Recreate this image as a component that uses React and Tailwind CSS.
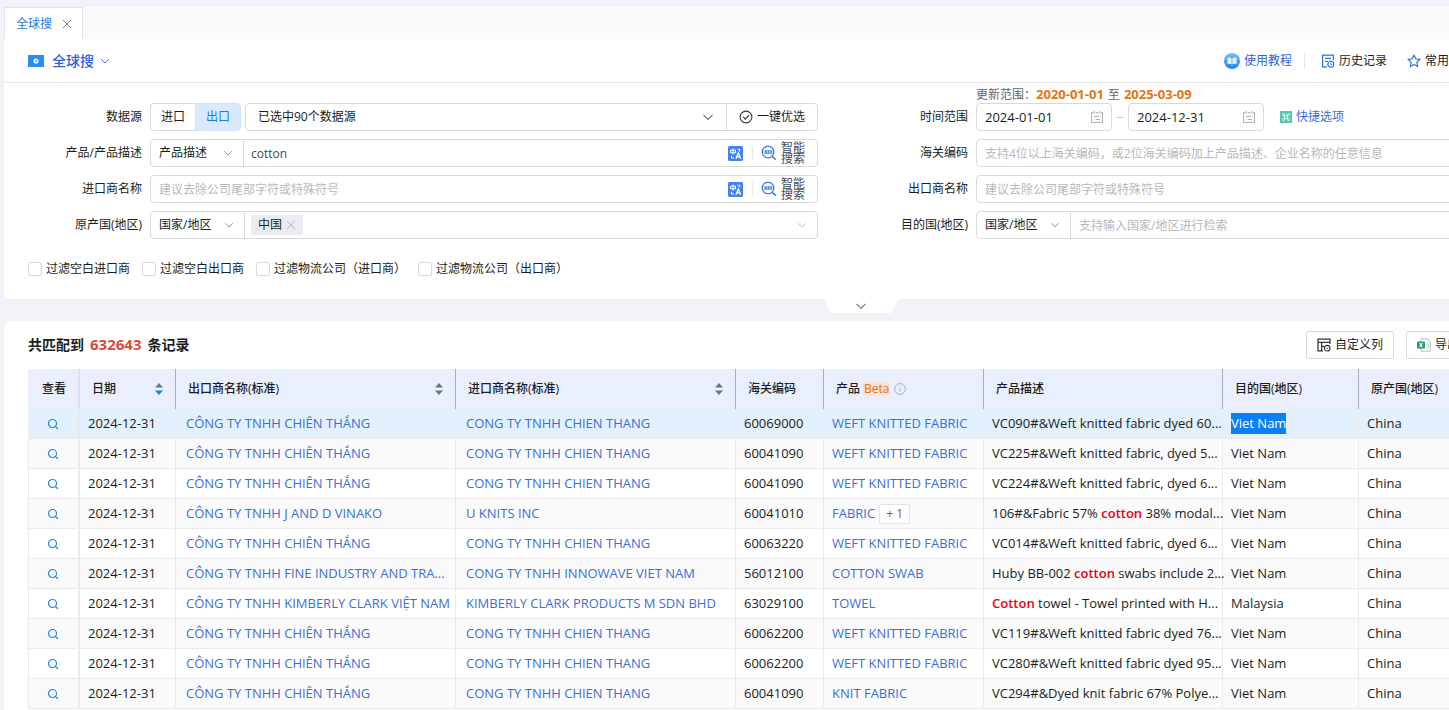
import { Fragment } from 'react'
import { Search } from 'lucide-react'

const EXPORTER = 'CÔNG TY TNHH CHIÊN THẮNG'
const IMPORTER = 'CONG TY TNHH CHIEN THANG'
const WEFT = 'WEFT KNITTED FABRIC'

const ROWS = [
  { exporter: EXPORTER, importer: IMPORTER, hs: '60069000', product: WEFT, desc: 'VC090#&Weft knitted fabric dyed 60...', dest: 'Viet Nam', active: true },
  { exporter: EXPORTER, importer: IMPORTER, hs: '60041090', product: WEFT, desc: 'VC225#&Weft knitted fabric, dyed 5...', dest: 'Viet Nam' },
  { exporter: EXPORTER, importer: IMPORTER, hs: '60041090', product: WEFT, desc: 'VC224#&Weft knitted fabric, dyed 6...', dest: 'Viet Nam' },
  { exporter: 'CÔNG TY TNHH J AND D VINAKO', importer: 'U KNITS INC', hs: '60041010', product: 'FABRIC', more: '+ 1', desc: '106#&Fabric 57% cotton 38% modal...', dest: 'Viet Nam' },
  { exporter: EXPORTER, importer: IMPORTER, hs: '60063220', product: WEFT, desc: 'VC014#&Weft knitted fabric, dyed 6...', dest: 'Viet Nam' },
  { exporter: 'CÔNG TY TNHH FINE INDUSTRY AND TRA...', importer: 'CONG TY TNHH INNOWAVE VIET NAM', hs: '56012100', product: 'COTTON SWAB', desc: 'Huby BB-002 cotton swabs include 2...', dest: 'Viet Nam' },
  { exporter: 'CÔNG TY TNHH KIMBERLY CLARK VIỆT NAM', importer: 'KIMBERLY CLARK PRODUCTS M SDN BHD', hs: '63029100', product: 'TOWEL', desc: 'Cotton towel - Towel printed with H...', dest: 'Malaysia' },
  { exporter: EXPORTER, importer: IMPORTER, hs: '60062200', product: WEFT, desc: 'VC119#&Weft knitted fabric dyed 76...', dest: 'Viet Nam' },
  { exporter: EXPORTER, importer: IMPORTER, hs: '60062200', product: WEFT, desc: 'VC280#&Weft knitted fabric dyed 95...', dest: 'Viet Nam' },
  { exporter: EXPORTER, importer: IMPORTER, hs: '60041090', product: 'KNIT FABRIC', desc: 'VC294#&Dyed knit fabric 67% Polye...', dest: 'Viet Nam' },
]

const FILTERS = ['过滤空白进口商', '过滤空白出口商', '过滤物流公司（进口商）', '过滤物流公司（出口商）']

function Chevron({ className }) {
  return (
    <svg viewBox="0 0 12 12" className={className} fill="none" stroke="currentColor" strokeWidth="1.1">
      <path d="M1.5 3.8 6 8.4l4.5-4.6" />
    </svg>
  )
}

function Close({ className }) {
  return (
    <svg viewBox="0 0 10 10" className={className} fill="none" stroke="currentColor" strokeWidth="1">
      <path d="m1 1 8 8M9 1 1 9" />
    </svg>
  )
}

function CalendarIcon() {
  return (
    <svg viewBox="0 0 14 14" className="h-3.5 w-3.5 shrink-0 text-[#b0b0b0]" fill="none" stroke="currentColor">
      <path d="M3 2.5H1.5v10h11v-10H11M5.5 2.5h3M4 .8v3M10 .8v3M4 6.5h5M5.5 9.5H10" />
    </svg>
  )
}

function TranslateIcon() {
  return (
    <svg viewBox="0 0 15 15" className="h-[15px] w-[15px]" fill="none" stroke="#fff">
      <rect width="15" height="15" rx="1.5" fill="#4383ee" stroke="none" />
      <path d="M2.5 4.2h5v2.6h-5zM5 2.5v6M9.5 3.2h2.2v2.3M3.5 9.8V12h2.6" />
      <path d="m8 12.8 2.3-6 2.3 6M8.8 10.9h3" strokeWidth="1.3" />
    </svg>
  )
}

function SmartSearchIcon() {
  return (
    <svg viewBox="0 0 16 16" className="h-4 w-4" fill="none" stroke="#3a7be0">
      <circle cx="7" cy="7" r="5.8" strokeWidth="1.3" />
      <path d="m11.2 11.2 3.6 3.6" strokeWidth="1.6" />
      <path d="M3.6 8.8 5 5.2l1.2 3.6M4.2 7.7h1.6M7.5 5.2v3.6M9.2 5.2v3.6M10.6 5.4v3.2" strokeWidth=".7" />
      <path d="M2.6 7h8.8" strokeWidth="4" opacity=".4" />
    </svg>
  )
}

function SortIcon({ desc }) {
  return (
    <svg viewBox="0 0 8 14" className="h-3.5 w-2 shrink-0">
      <path d="M4 1 8 5.5H0z" fill="#71747f" />
      <path d="M4 13 0 8.5h8z" fill={desc ? '#1a83f0' : '#71747f'} />
    </svg>
  )
}

function Field({ label, htmlFor, children }) {
  return (
    <div className="flex h-7 items-center gap-2">
      <label htmlFor={htmlFor} className="w-[114px] shrink-0 text-right whitespace-nowrap">{label}</label>
      {children}
    </div>
  )
}

function KindSelect({ id, value, label, className }) {
  return (
    <div className={`flex h-full shrink-0 items-center border-r border-[#d9d9d9] ${className}`}>
      <select id={id} aria-label={label} className="h-full w-full cursor-pointer appearance-none bg-transparent pl-2 outline-none">
        <option>{value}</option>
      </select>
      <Chevron className="pointer-events-none mr-2.5 h-2.5 w-2.5 shrink-0 text-[#8c8c8c]" />
    </div>
  )
}

function SmartTools() {
  return (
    <>
      <button type="button" aria-label="翻译" className="shrink-0"><TranslateIcon /></button>
      <span className="mr-2 ml-[9px] h-3.5 w-px bg-[#e8e8e8]" />
      <button type="button" className="mr-3 flex shrink-0 items-center gap-1">
        <SmartSearchIcon />
        <span className="w-6 text-left leading-[11px] text-[#444b5c]">智能搜索</span>
      </button>
    </>
  )
}

function DateBox({ id, value, label }) {
  return (
    <div className="flex h-7 w-[136px] items-center rounded border border-[#d9d9d9] pr-[7px]">
      <input id={id} aria-label={label} defaultValue={value} className="h-full min-w-0 flex-1 bg-transparent pl-2 text-[13px] outline-none" />
      <CalendarIcon />
    </div>
  )
}

function Description({ text }) {
  return text.split(/(cotton)/i).map((part, i) =>
    part.toLowerCase() === 'cotton'
      ? <b key={i} className="font-semibold text-[#e60012]">{part}</b>
      : <Fragment key={i}>{part}</Fragment>
  )
}

function HeadCell({ children, sort, desc, last }) {
  return (
    <th scope="col" className={`bg-[#eaeffe] pr-3 pl-3 font-medium ${last ? '' : 'border-r border-[#a9acc0]'}`}>
      <div className="flex items-center justify-between">
        <span className="flex items-center whitespace-nowrap">{children}</span>
        {sort && <SortIcon desc={desc} />}
      </div>
    </th>
  )
}

function SearchForm() {
  const box = 'flex h-7 items-center rounded border border-[#d9d9d9]'
  return (
    <form className="px-6 pb-5" onSubmit={(e) => e.preventDefault()}>
      <div className="flex gap-9">
        <div className="flex flex-col gap-2 pt-5">
          <Field label="数据源" htmlFor="source">
            <div className="flex w-[668px] gap-1">
              <div className="flex h-7 w-[91px] shrink-0">
                <button type="button" className="flex-1 rounded-l border border-r-0 border-[#d9d9d9]">进口</button>
                <button type="button" className="flex-1 rounded-r border border-[#cfe4fb] bg-[#d7eafe] text-[#1f7ad8]">出口</button>
              </div>
              <div className={`${box} flex-1`}>
                <select id="source" className="h-full flex-1 cursor-pointer appearance-none bg-transparent pl-3 outline-none">
                  <option>已选中90个数据源</option>
                </select>
                <Chevron className="pointer-events-none mr-3 h-3 w-3 text-[#6b6b6b]" />
                <button type="button" className="flex h-full w-[91px] items-center justify-center gap-1 border-l border-[#d9d9d9]">
                  <svg viewBox="0 0 14 14" className="h-3.5 w-3.5" fill="none" stroke="#333" strokeWidth="1.1">
                    <circle cx="7" cy="7" r="5.9" />
                    <path d="m4.2 7 2.1 2.2 3.8-4" />
                  </svg>
                  一键优选
                </button>
              </div>
            </div>
          </Field>
          <Field label="产品/产品描述" htmlFor="product">
            <div className={`${box} w-[668px]`}>
              <KindSelect label="产品类型" value="产品描述" className="w-[93px]" />
              <input id="product" defaultValue="cotton" className="h-full min-w-0 flex-1 pl-[7px] text-[#444] outline-none" />
              <SmartTools />
            </div>
          </Field>
          <Field label="进口商名称" htmlFor="importer">
            <div className={`${box} w-[668px]`}>
              <input id="importer" placeholder="建议去除公司尾部字符或特殊符号" className="h-full min-w-0 flex-1 pl-2 outline-none placeholder:text-[#b8b8b8]" />
              <SmartTools />
            </div>
          </Field>
          <Field label="原产国(地区)" htmlFor="origin">
            <div className={`${box} w-[668px]`}>
              <KindSelect id="origin" value="国家/地区" className="w-[94px]" />
              <span className="ml-1.5 flex h-5 items-center gap-1 rounded-xs bg-[#ebebf2] px-[7px]">
                中国
                <button type="button" aria-label="移除"><Close className="h-2.5 w-2.5 text-[#b4b4bc]" /></button>
              </span>
              <Chevron className="mr-2.5 ml-auto h-2.5 w-2.5 text-[#bfbfbf]" />
            </div>
          </Field>
        </div>

        <div className="flex flex-1 flex-col gap-2 pt-1">
          <div>
            <p className="ml-[122px] flex h-4 items-center whitespace-nowrap text-[#666]">
              <span>更新范围：</span>
              <b className="text-[13px] text-[#e6730c]">2020-01-01</b>
              <span className="mx-1">至</span>
              <b className="text-[13px] text-[#e6730c]">2025-03-09</b>
            </p>
            <Field label="时间范围" htmlFor="from">
              <div className="flex items-center">
                <DateBox id="from" value="2024-01-01" />
                <span className="mx-1 h-px w-2 bg-[#cfcfcf]" />
                <DateBox label="结束日期" value="2024-12-31" />
                <button type="button" className="ml-4 flex items-center gap-1 text-[#3b6fd4]">
                  <svg viewBox="0 0 12 12" className="h-3 w-3" fill="none" stroke="#fff">
                    <rect width="12" height="12" rx="1" fill="#54c7b0" stroke="none" />
                    <path d="M4.5 4.5h3v3h-3zM4.5 4.5h-1a1 1 0 1 1 1-1zM7.5 4.5h1a1 1 0 1 0-1-1zM4.5 7.5h-1a1 1 0 1 0 1 1zM7.5 7.5h1a1 1 0 1 1-1 1z" strokeWidth=".9" />
                  </svg>
                  快捷选项
                </button>
              </div>
            </Field>
          </div>
          <Field label="海关编码" htmlFor="hs">
            <div className={`${box} flex-1`}>
              <input id="hs" placeholder="支持4位以上海关编码，或2位海关编码加上产品描述、企业名称的任意信息" className="h-full min-w-0 flex-1 pl-2 outline-none placeholder:text-[#b8b8b8]" />
            </div>
          </Field>
          <Field label="出口商名称" htmlFor="exporter">
            <div className={`${box} flex-1`}>
              <input id="exporter" placeholder="建议去除公司尾部字符或特殊符号" className="h-full min-w-0 flex-1 pl-2 outline-none placeholder:text-[#b8b8b8]" />
            </div>
          </Field>
          <Field label="目的国(地区)" htmlFor="dest">
            <div className={`${box} flex-1`}>
              <KindSelect label="地区类型" value="国家/地区" className="w-[94px]" />
              <input id="dest" placeholder="支持输入国家/地区进行检索" className="h-full min-w-0 flex-1 pl-2 outline-none placeholder:text-[#b8b8b8]" />
            </div>
          </Field>
        </div>
      </div>

      <div className="mt-5 flex h-5 items-center gap-3">
        {FILTERS.map((name) => (
          <label key={name} className="flex items-center gap-1 whitespace-nowrap">
            <input type="checkbox" className="h-3.5 w-3.5 appearance-none rounded-xs border border-[#d9d9d9] bg-white" />
            {name}
          </label>
        ))}
      </div>
    </form>
  )
}

function ResultTable() {
  return (
    <table className="w-full table-fixed border-separate border-spacing-0 text-left text-[13px]">
      <colgroup>
        <col className="w-[52px]" />
        <col className="w-[96px]" />
        <col className="w-[280px]" />
        <col className="w-[280px]" />
        <col className="w-[88px]" />
        <col className="w-[160px]" />
        <col className="w-[239px]" />
        <col className="w-[136px]" />
        <col />
      </colgroup>
      <thead>
        <tr className="h-10 text-xs">
          <th scope="col" className="border-r-2 border-[#dee0f0] bg-[#eaeffe] pl-0.5 text-center font-medium">查看</th>
          <HeadCell sort desc>日期</HeadCell>
          <HeadCell sort>出口商名称(标准)</HeadCell>
          <HeadCell sort>进口商名称(标准)</HeadCell>
          <HeadCell>海关编码</HeadCell>
          <HeadCell>
            产品
            <span className="ml-[3px] rounded-xs bg-[#fbe3d3] px-px leading-[14px] font-normal text-[#e0701f]">Beta</span>
            <svg viewBox="0 0 12 12" className="ml-1 h-3 w-3" fill="none" stroke="#a8adba">
              <circle cx="6" cy="6" r="5.4" />
              <path d="M6 5.2v3.6M6 3v1.1" />
            </svg>
          </HeadCell>
          <HeadCell>产品描述</HeadCell>
          <HeadCell>目的国(地区)</HeadCell>
          <HeadCell last>原产国(地区)</HeadCell>
        </tr>
      </thead>
      <tbody className="[&_td]:border-b [&_td]:border-[#ebebee] [&_td]:whitespace-nowrap">
        {ROWS.map((row, idx) => (
          <tr key={idx} className={`h-[30px] ${row.active ? 'bg-[#e2f1fd]' : idx % 2 ? 'bg-[#fafafa]' : 'bg-white'}`}>
            <td className="border-r-2 border-l border-r-[#e9e9f2] pr-px text-center">
              <button type="button" aria-label="查看" className="block w-full text-[#1f86e0]">
                <Search className="mx-auto h-3 w-3" strokeWidth={2.4} />
              </button>
            </td>
            <td className="border-r pl-2">2024-12-31</td>
            <td className="border-r pl-2.5"><a href="#" className="text-[#3b6fd4]">{row.exporter}</a></td>
            <td className="border-r pl-2.5"><a href="#" className="text-[#3b6fd4]">{row.importer}</a></td>
            <td className="border-r pl-2">{row.hs}</td>
            <td className="border-r pl-2">
              <a href="#" className="text-[#3b6fd4]">{row.product}</a>
              {row.more && (
                <button type="button" className="ml-1 h-5 rounded-xs border border-[#e2e2e6] bg-white px-1.5 text-xs text-[#666]">{row.more}</button>
              )}
            </td>
            <td className="border-r pl-2"><Description text={row.desc} /></td>
            <td className="border-r pl-2">
              {row.active ? <span className="inline-block h-[21px] bg-[#0a80f5] leading-[21px] text-white">{row.dest}</span> : row.dest}
            </td>
            <td className="pl-2">China</td>
          </tr>
        ))}
      </tbody>
    </table>
  )
}

export default function App() {
  return (
    <div className="min-h-screen overflow-x-hidden bg-[#f2f3f8] font-['Open_Sans','Noto_Sans_CJK_SC',sans-serif] text-xs text-[#1a1d22]">
      <div className="flex min-h-screen min-w-[1498px] flex-col pt-[7px] pl-1">
        {/* Page tabs */}
        <nav className="flex h-8 bg-[#fafafa]">
          <div className="flex items-center gap-2.5 border border-b-0 border-[#e0e2ea] bg-white pr-2.5 pl-[11px]">
            <a href="#" className="whitespace-nowrap text-[#1f78d8]">全球搜</a>
            <button type="button" aria-label="关闭"><Close className="h-2.5 w-2.5 text-[#777]" /></button>
          </div>
        </nav>

        {/* Search panel */}
        <section className="rounded-b-md bg-white">
          <header className="flex h-11 items-center border-b border-[#e8e8ec] pr-[25px] pl-6">
            <svg viewBox="0 0 16 12" className="h-3 w-4">
              <rect width="16" height="12" fill="#2b8cf0" />
              <circle cx="8" cy="6" r="2.6" fill="#e8f4ff" />
              <path d="m6.8 7.2 1.8-2.6.6 1.6z" fill="#2b8cf0" />
            </svg>
            <button type="button" className="ml-2 flex items-center gap-1.5 text-sm font-medium text-[#2a62d8]">
              全球搜
              <Chevron className="h-2.5 w-2.5" />
            </button>
            <div className="ml-auto flex items-center">
              <a href="#" className="flex items-center gap-1 text-[#3063cf]">
                <svg viewBox="0 0 16 16" className="h-4 w-4">
                  <defs>
                    <linearGradient id="guide" x1="0" y1="0" x2="0" y2="1">
                      <stop stopColor="#6cc4fb" />
                      <stop offset="1" stopColor="#2a7ff0" />
                    </linearGradient>
                  </defs>
                  <circle cx="8" cy="8" r="8" fill="url(#guide)" />
                  <path d="M3.5 4.8c1.6-.5 3-.4 4.1.4v6.3c-1.1-.7-2.5-.8-4.1-.4zM12.5 4.8c-1.6-.5-3-.4-4.1.4v6.3c1.1-.7 2.5-.8 4.1-.4z" fill="#e6f4ff" />
                </svg>
                使用教程
              </a>
              <span className="mx-3 h-4 w-px bg-[#e8e8ec]" />
              <a href="#" className="ml-1 flex items-center gap-1">
                <svg viewBox="0 0 14 14" className="h-3.5 w-3.5" fill="none" stroke="#2f74dc" strokeWidth="1.2">
                  <path d="M12.4 6V1.2H1.6v11.6H6M4 4.4h6M4 7.4h3" />
                  <circle cx="9.8" cy="10.2" r="3" />
                  <path d="M9.8 8.7v1.7H11" strokeWidth="1" />
                </svg>
                历史记录
              </a>
              <a href="#" className="ml-5 flex items-center gap-1">
                <svg viewBox="0 0 14 14" className="h-3.5 w-3.5" fill="none" stroke="#2f74dc" strokeWidth="1.2" strokeLinejoin="round">
                  <path d="m7 1 1.8 3.9 4.2.5-3.1 2.9.8 4.2L7 10.4l-3.7 2.1.8-4.2L1 5.4l4.2-.5z" />
                </svg>
                常用条件
              </a>
            </div>
          </header>
          <SearchForm />
        </section>

        <div className="flex h-[22px] pl-[820px]">
          <button type="button" aria-label="展开" className="flex h-3.5 w-[74px] items-center justify-center bg-white [clip-path:polygon(0_0,100%_0,91%_100%,9%_100%)]">
            <Chevron className="h-3 w-3 text-[#777]" />
          </button>
        </div>

        {/* Results */}
        <section className="flex-1 rounded-t-md bg-white px-6">
          <div className="flex h-12 items-center justify-between">
            <h2 className="flex items-center gap-1.5 text-sm font-bold">
              共匹配到
              <span className="text-[15px] text-[#dc4a3c]">632643</span>
              条记录
            </h2>
            <div className="flex gap-3">
              <button type="button" className="flex h-7 w-[88px] items-center justify-center gap-1 rounded-xs border border-[#d9d9d9] whitespace-nowrap">
                <svg viewBox="0 0 14 14" className="h-3.5 w-3.5" fill="none" stroke="#333" strokeWidth="1.2">
                  <path d="M13 6V1.2H1v11.6h5M1 4.4h12M4.6 4.4v8.4M4.6 8.4H7" />
                  <circle cx="10.2" cy="10.2" r="2.8" />
                  <circle cx="10.2" cy="10.2" r=".7" fill="#333" stroke="none" />
                </svg>
                自定义列
              </button>
              <button type="button" className="flex h-7 w-[68px] items-center gap-1 rounded-xs border border-[#d9d9d9] pl-2.5 whitespace-nowrap">
                <svg viewBox="0 0 14 14" className="h-3.5 w-3.5" fill="none">
                  <path d="M4 .8h6.5L13.3 4v9.2H4z" fill="#fff" stroke="#b5b9c0" />
                  <path d="M9.5 6H12M9.5 8H12M9.5 10H12" stroke="#b5b9c0" />
                  <rect y="3.5" width="8" height="7" rx=".8" fill="#1fa463" />
                  <path d="m2.6 5 2.8 4M5.4 5 2.6 9" stroke="#fff" strokeWidth="1.1" />
                </svg>
                导出
              </button>
            </div>
          </div>
          <ResultTable />
        </section>
      </div>
    </div>
  )
}
